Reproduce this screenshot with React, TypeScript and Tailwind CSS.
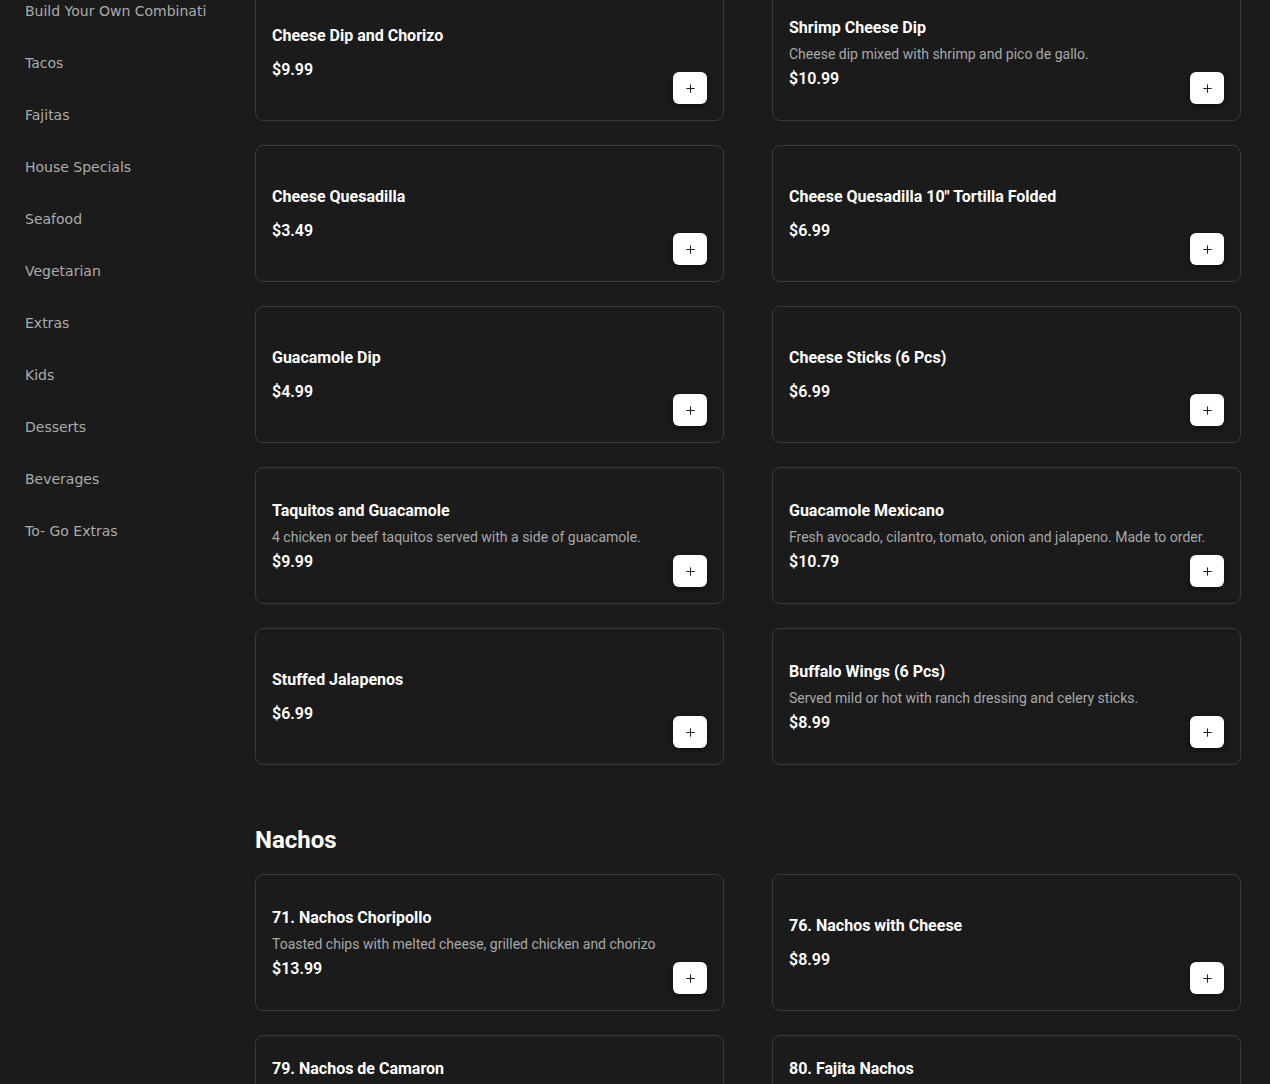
import { Plus } from "lucide-react";

type Item = { name: string; desc?: string; price: string };

const categories = [
  "Build Your Own Combination",
  "Tacos",
  "Fajitas",
  "House Specials",
  "Seafood",
  "Vegetarian",
  "Extras",
  "Kids",
  "Desserts",
  "Beverages",
  "To- Go Extras",
];

const appetizers: Item[] = [
  { name: "Cheese Dip and Chorizo", price: "$9.99" },
  { name: "Shrimp Cheese Dip", desc: "Cheese dip mixed with shrimp and pico de gallo.", price: "$10.99" },
  { name: "Cheese Quesadilla", price: "$3.49" },
  { name: 'Cheese Quesadilla 10" Tortilla Folded', price: "$6.99" },
  { name: "Guacamole Dip", price: "$4.99" },
  { name: "Cheese Sticks (6 Pcs)", price: "$6.99" },
  { name: "Taquitos and Guacamole", desc: "4 chicken or beef taquitos served with a side of guacamole.", price: "$9.99" },
  { name: "Guacamole Mexicano", desc: "Fresh avocado, cilantro, tomato, onion and jalapeno. Made to order.", price: "$10.79" },
  { name: "Stuffed Jalapenos", price: "$6.99" },
  { name: "Buffalo Wings (6 Pcs)", desc: "Served mild or hot with ranch dressing and celery sticks.", price: "$8.99" },
];

const nachos: Item[] = [
  { name: "71. Nachos Choripollo", desc: "Toasted chips with melted cheese, grilled chicken and chorizo", price: "$13.99" },
  { name: "76. Nachos with Cheese", price: "$8.99" },
  {
    name: "79. Nachos de Camaron",
    desc: "Toasted chips topped with grilled shrimp, melted cheese, onions, tomatoes and bell peppers.",
    price: "$14.99",
  },
  {
    name: "80. Fajita Nachos",
    desc: "Toasted chips topped with grilled steak or chicken, onions, bell peppers and melted cheese.",
    price: "$13.99",
  },
];

function MenuCard({ item }: { item: Item }) {
  return (
    <div className="relative flex h-[137px] items-center rounded-lg border border-[#3a3a3a] bg-[#1b1b1b] p-4">
      <div className={`flex min-w-0 flex-1 flex-col ${item.desc ? "pt-[2px]" : ""}`}>
        <h3 className={`text-base leading-6 font-bold text-white ${item.desc ? "mb-1" : "mb-[10px]"}`}>
          {item.name}
        </h3>
        {item.desc && (
          <p className="mb-[3px] text-sm leading-5 text-[#a8a8a8]">{item.desc}</p>
        )}
        <p className="text-base leading-6 font-semibold text-white">{item.price}</p>
      </div>
      <button className="absolute right-[16px] bottom-[16px] flex h-[32px] w-[34px] items-center justify-center rounded-md bg-white shadow-[0_2px_6px_rgba(0,0,0,0.5)]">
        <Plus className="h-[13px] w-[13px] text-[#222]" strokeWidth={2} />
      </button>
    </div>
  );
}

export default function App() {
  return (
    <div className="h-[1084px] overflow-hidden bg-[#1b1b1b]">
      <div className="flex">
        <aside className="-mt-[15px] w-[255px] shrink-0 pl-[25px]">
          {categories.map((c) => (
            <div
              key={c}
              className="w-[182px] overflow-hidden py-4 text-sm leading-5 whitespace-nowrap text-[#ababab]"
              style={{ fontFamily: "'DejaVu Sans', sans-serif" }}
            >
              {c}
            </div>
          ))}
        </aside>

        <main
          className="-mt-4 w-[986px] shrink-0"
          style={{ fontFamily: "Roboto, 'Liberation Sans', sans-serif" }}
        >
          <div className="grid grid-cols-2 gap-x-12 gap-y-6">
            {appetizers.map((item) => (
              <MenuCard key={item.name} item={item} />
            ))}
          </div>

          <h2 className="mt-[59px] mb-[18px] text-2xl leading-8 font-bold text-white">Nachos</h2>
          <div className="grid grid-cols-2 gap-x-12 gap-y-6">
            {nachos.map((item) => (
              <MenuCard key={item.name} item={item} />
            ))}
          </div>
        </main>
      </div>
    </div>
  );
}
